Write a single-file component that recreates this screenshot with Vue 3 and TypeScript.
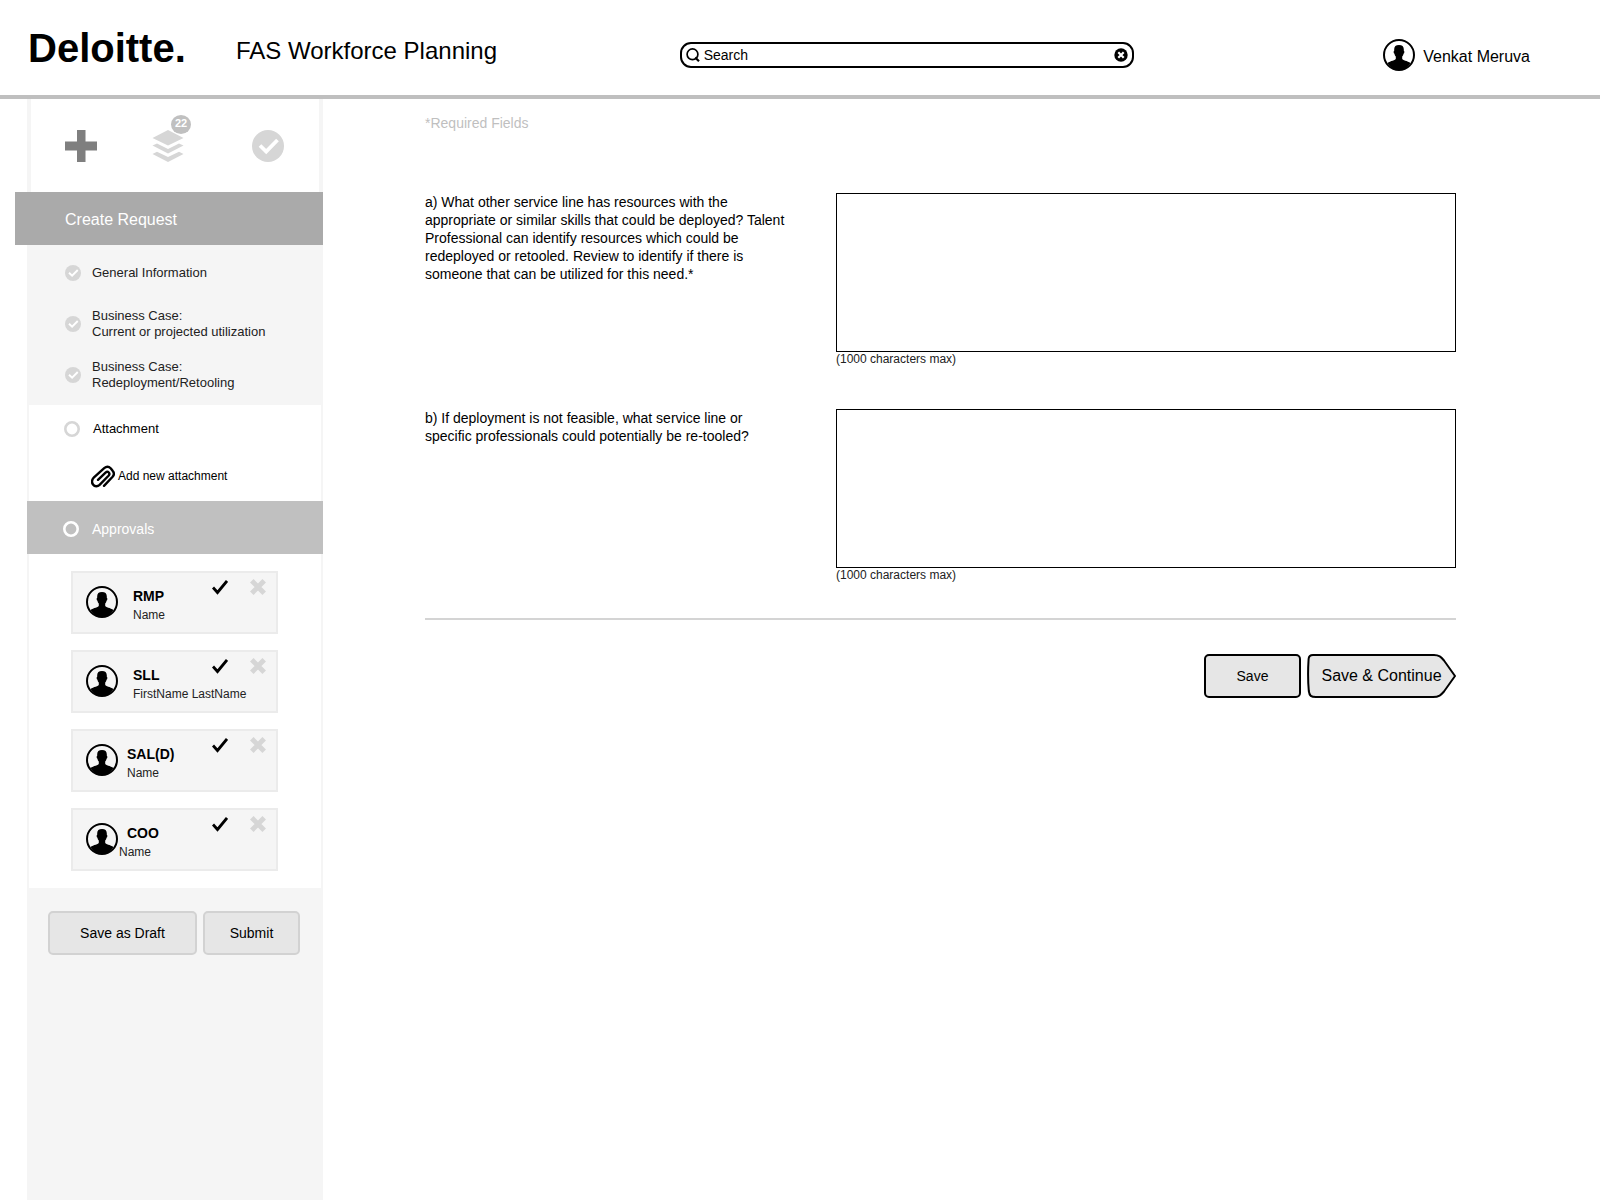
<script setup lang="ts">
import { ref } from 'vue'

interface Step {
  id: string
  lines: string[]
}

interface Approver {
  role: string
  name: string
  layout: 'wide' | 'narrow' | 'tight'
}

interface Question {
  id: string
  text: string
}

const query = ref('Search')
const answers = ref<Record<string, string>>({ a: '', b: '' })

const steps: Step[] = [
  { id: 'general', lines: ['General Information'] },
  { id: 'utilization', lines: ['Business Case:', 'Current or projected utilization'] },
  { id: 'redeployment', lines: ['Business Case:', 'Redeployment/Retooling'] },
]

const approvers: Approver[] = [
  { role: 'RMP', name: 'Name', layout: 'wide' },
  { role: 'SLL', name: 'FirstName LastName', layout: 'wide' },
  { role: 'SAL(D)', name: 'Name', layout: 'narrow' },
  { role: 'COO', name: 'Name', layout: 'tight' },
]

const questions: Question[] = [
  {
    id: 'a',
    text: 'a) What other service line has resources with the appropriate or similar skills that could be deployed? Talent Professional can identify resources which could be redeployed or retooled. Review to identify if there is someone that can be utilized for this need.*',
  },
  {
    id: 'b',
    text: 'b) If deployment is not feasible, what service line or specific professionals could potentially be re-tooled?',
  },
]
</script>

<template>
  <svg class="sprite" aria-hidden="true">
    <symbol id="avatar" viewBox="0 0 32 32">
      <circle cx="16" cy="16" r="15" fill="none" stroke="#000" stroke-width="2" />
      <path d="M16 6c-3.200 0-4.800 1.500-4.800 4.300v1.500c-.9.200-.7 2.700.3 2.900.2 1.400.7 2.200 1.300 2.900v2.200c0 1.600-5.400 2.100-8.300 4.200C7 28.500 11.500 31 16 31s9-2.500 11.500-7c-2.900-2.100-8.300-2.600-8.300-4.200v-2.200c.6-.7 1.100-1.500 1.300-2.900 1-.2 1.200-2.700.3-2.900v-1.500C20.800 7.500 19.200 6 16 6z" />
    </symbol>
    <symbol id="done" viewBox="0 0 32 32">
      <circle cx="16" cy="16" r="16" fill="#d6d6d6" />
      <path d="M8 15.500l6.200 6L25.500 10" fill="none" stroke="#fff" stroke-width="3.800" />
    </symbol>
    <symbol id="ring" viewBox="0 0 16 16">
      <circle cx="8" cy="8" r="6.700" fill="none" stroke="currentColor" stroke-width="2.600" />
    </symbol>
  </svg>

  <div class="page">
    <header class="header">
      <div class="logo">Deloitte.</div>
      <h1 class="title">FAS Workforce Planning</h1>
      <form class="search" role="search" @submit.prevent>
        <svg class="search-icon" viewBox="0 0 14 14" aria-hidden="true">
          <circle cx="6.500" cy="6.300" r="5.400" fill="none" stroke="#000" stroke-width="1.700" />
          <path d="M9.200 9.500l3.800 3.700" stroke="#000" stroke-width="2.200" />
        </svg>
        <input v-model="query" class="search-input" type="text" aria-label="Search" />
        <button class="clear" type="button" aria-label="Clear" @click="query = ''">
          <svg viewBox="0 0 14 14" aria-hidden="true">
            <circle cx="7" cy="7" r="6.700" />
            <path d="M4.300 4.300l5.400 5.400M9.700 4.300l-5.400 5.400" stroke="#fff" stroke-width="2.200" />
          </svg>
        </button>
      </form>
      <div class="user">
        <svg class="avatar" aria-hidden="true"><use href="#avatar" /></svg>
        <span class="user-name">Venkat Meruva</span>
      </div>
    </header>

    <div class="body">
      <aside class="sidebar">
        <div class="tools">
          <button class="tool" type="button" aria-label="Create">
            <svg viewBox="0 0 32 32" aria-hidden="true"><path d="M12 0h8.500v11.500H32v9H20.500V32H12V20.500H0v-9h12z" fill="#7f7f7f" /></svg>
          </button>
          <button class="tool" type="button" aria-label="Requests">
            <svg viewBox="0 0 32 32" aria-hidden="true" fill="#d6d6d6">
              <path d="M16 0l15.500 8L16 15.500.5 8z" />
              <path d="M.5 15.500l4.500-2 11 5.500 11-5.500 4.500 2L16 23.500z" />
              <path d="M.5 24l4.500-2.200L16 27l11-5.200 4.500 2.200L16 32z" />
            </svg>
            <span class="badge">22</span>
          </button>
          <button class="tool" type="button" aria-label="Approved">
            <svg aria-hidden="true"><use href="#done" /></svg>
          </button>
        </div>

        <h2 class="section">Create Request</h2>

        <ul class="steps">
          <li v-for="step in steps" :key="step.id" class="step">
            <svg class="mark" aria-hidden="true"><use href="#done" /></svg>
            <a class="step-link" href="#"><span v-for="line in step.lines" :key="line">{{ line }}</span></a>
          </li>
        </ul>

        <div class="attachment">
          <div class="step-head">
            <svg class="mark" aria-hidden="true"><use href="#ring" /></svg>
            <a href="#">Attachment</a>
          </div>
          <a class="add" href="#">
            <svg class="clip" viewBox="0 0 24 24" aria-hidden="true">
              <path
                d="M13 21.800l8.600-9c1.700-1.900 1.700-4 0-6l-1.700-2.300c-2-2-4.700-2-6.700-.3L3 13.300c-2.200 2.400-2.600 5-1 7.200 1.800 2.400 4.600 2.300 6.600.4l8.900-9.100c2.200-2.500-.5-5.300-3-3.200l-7.500 7.200"
                fill="none" stroke="#000" stroke-width="2.400" stroke-linecap="round"
              />
            </svg>
            <span>Add new attachment</span>
          </a>
        </div>

        <h2 class="approvals">
          <svg class="mark" aria-hidden="true"><use href="#ring" /></svg>
          <span>Approvals</span>
        </h2>

        <div class="cards">
          <article v-for="person in approvers" :key="person.role" class="card" :class="person.layout">
            <svg class="avatar" aria-hidden="true"><use href="#avatar" /></svg>
            <div class="who">
              <h3 class="role">{{ person.role }}</h3>
              <p class="name">{{ person.name }}</p>
            </div>
            <div class="actions">
              <button class="action" type="button" aria-label="Approve">
                <svg viewBox="0 0 16 16" aria-hidden="true"><path d="M1 8.500l4.500 5L15 2" fill="none" stroke="#000" stroke-width="2.800" /></svg>
              </button>
              <button class="action" type="button" aria-label="Reject">
                <svg viewBox="0 0 16 16" aria-hidden="true"><path d="M1.800 1.800l12.400 12.400M14.200 1.800L1.800 14.200" fill="none" stroke="#d6d6d6" stroke-width="5" /></svg>
              </button>
            </div>
          </article>
        </div>

        <div class="sidebar-actions">
          <button class="button draft" type="button">Save as Draft</button>
          <button class="button" type="button">Submit</button>
        </div>
      </aside>

      <main class="main">
        <p class="required">*Required Fields</p>
        <form @submit.prevent>
          <div class="questions">
            <div v-for="question in questions" :key="question.id" class="question">
              <label class="label" :for="question.id">{{ question.text }}</label>
              <div class="answer">
                <textarea :id="question.id" v-model="answers[question.id]" class="box" maxlength="1000"></textarea>
                <p class="hint">(1000 characters max)</p>
              </div>
            </div>
          </div>
          <hr class="rule" />
          <div class="form-actions">
            <button class="button dark" type="button">Save</button>
            <button class="continue" type="submit">
              <svg class="arrow" viewBox="0 0 149 44" aria-hidden="true">
                <path
                  d="M6 1H127C132 1 134 3 137 6.500L148 22L137 37.500C134 41 132 43 126 43H9C4 43 2.500 42 1.800 37C1 28 1 14 1.600 5C1.800 2 3 1 6 1Z"
                  fill="#e6e6e6" stroke="#000" stroke-width="2"
                />
              </svg>
              <span class="continue-text">Save &amp; Continue</span>
            </button>
          </div>
        </form>
      </main>
    </div>
  </div>
</template>

<style>
body {
  margin: 0;
  background: #fff;
}
</style>

<style scoped>
.sprite {
  position: absolute;
  width: 0;
  height: 0;
}

.page {
  display: flex;
  flex-direction: column;
  min-height: 100vh;
  color: #000;
  font-family: "Liberation Sans", Arial, sans-serif;
  font-size: 14px;
  line-height: 18px;
}

h1,
h2,
h3,
p,
ul {
  margin: 0;
  padding: 0;
  font-weight: 400;
}

a {
  color: inherit;
  text-decoration: none;
}

button,
input,
textarea {
  box-sizing: border-box;
  margin: 0;
  padding: 0;
  border: 0;
  background: none;
  color: inherit;
  font: inherit;
}

button {
  cursor: pointer;
}

svg {
  display: block;
}

.header {
  display: grid;
  grid-template-columns: 208px minmax(280px, 444fr) minmax(200px, 455fr) minmax(160px, 396fr);
  align-items: center;
  box-sizing: border-box;
  height: 99px;
  padding: 15px 70px 0 28px;
  border-bottom: 4px solid #bfbfbf;
}

.logo {
  padding-bottom: 14px;
  font-size: 40px;
  font-weight: 700;
  line-height: 44px;
}

.title {
  padding-bottom: 8px;
  font-size: 24px;
  line-height: 28px;
}

.search {
  display: flex;
  align-items: center;
  box-sizing: border-box;
  height: 26px;
  padding: 0 4px;
  border: 2px solid #000;
  border-radius: 11px;
  gap: 4px;
}

.search-icon {
  flex: none;
  width: 14px;
  height: 14px;
}

.search-input {
  flex: 1;
  min-width: 0;
  height: 18px;
  outline: 0;
}

.clear,
.clear svg {
  flex: none;
  width: 14px;
  height: 14px;
}

.user {
  display: flex;
  align-items: center;
  justify-content: flex-end;
  gap: 8px;
  font-size: 16px;
}

.user-name {
  padding-top: 4px;
}

.avatar {
  flex: none;
  width: 32px;
  height: 32px;
}

.body {
  display: flex;
  flex: 1;
  padding-left: 27px;
}

.sidebar {
  flex: none;
  width: 296px;
  background: #f5f5f5;
}

.tools {
  display: grid;
  grid-template-columns: 87px 100px 32px;
  box-sizing: border-box;
  height: 93px;
  margin: 0 4px;
  padding: 31px 34px;
  background: #fff;
}

.tool {
  position: relative;
  width: 32px;
  height: 32px;
}

.tool svg {
  width: 32px;
  height: 32px;
}

.badge {
  position: absolute;
  top: -15px;
  right: -7px;
  width: 20px;
  height: 19px;
  border-radius: 50%;
  background: #c0c0c0;
  color: #fff;
  font-size: 11px;
  font-weight: 700;
  line-height: 17px;
  text-align: center;
}

.section {
  margin-left: -12px;
  padding: 2px 0 0 50px;
  background: #aaa;
  color: #fff;
  font-size: 16px;
  line-height: 51px;
}

.steps {
  display: flex;
  flex-direction: column;
  gap: 1px;
  padding: 3px 0 5px 38px;
  color: #222;
  font-size: 13px;
  line-height: 16px;
  list-style: none;
}

.step {
  display: flex;
  align-items: center;
  height: 50px;
  gap: 11px;
}

.step-link span {
  display: block;
}

.mark {
  flex: none;
  width: 16px;
  height: 16px;
}

.attachment {
  margin: 0 2px;
  padding: 0 0 13px 35px;
  background: #fff;
  font-size: 13px;
  line-height: 16px;
}

.step-head {
  display: flex;
  align-items: center;
  height: 48px;
  gap: 13px;
}

.step-head .mark {
  color: #d6d6d6;
}

.add {
  display: flex;
  align-items: center;
  height: 24px;
  margin: 11px 0 0 27px;
  gap: 3px;
  font-size: 12px;
  line-height: 14px;
}

.clip {
  width: 24px;
  height: 24px;
}

.approvals {
  display: flex;
  align-items: center;
  box-sizing: border-box;
  height: 53px;
  padding: 3px 0 0 36px;
  background: #c0c0c0;
  color: #fff;
  font-size: 14px;
  gap: 13px;
}

.cards {
  display: flex;
  flex-direction: column;
  margin: 0 2px;
  padding: 17px 43px 17px 42px;
  background: #fff;
  gap: 16px;
}

.card {
  position: relative;
  display: flex;
  box-sizing: border-box;
  height: 63px;
  padding: 13px 10px 0 13px;
  border: 2px solid #ebebeb;
  background: #f5f5f5;
  gap: 15px;
}

.narrow {
  gap: 9px;
}

.tight {
  gap: 1px;
}

.tight .role {
  padding-left: 8px;
}

.role {
  font-size: 14px;
  font-weight: 700;
  line-height: 20px;
}

.name {
  padding-top: 2px;
  color: #222;
  font-size: 12px;
  line-height: 14px;
}

.actions {
  position: absolute;
  top: 6px;
  right: 10px;
  display: flex;
  gap: 22px;
}

.action,
.action svg {
  width: 16px;
  height: 16px;
}

.sidebar-actions {
  display: flex;
  padding: 23px 23px 0 21px;
  gap: 6px;
}

.button {
  width: 97px;
  height: 44px;
  border: 2px solid #d2d2d2;
  border-radius: 5px;
  background: #e6e6e6;
}

.draft {
  width: 149px;
}

.dark {
  border-color: #000;
}

.main {
  flex: 1;
  min-width: 0;
  padding: 15px 144px 40px 102px;
}

.required {
  color: #bfbfbf;
}

.questions {
  display: flex;
  flex-direction: column;
  padding-top: 61px;
  gap: 43px;
}

.question {
  display: grid;
  grid-template-columns: 362px minmax(0, 1fr);
  column-gap: 49px;
}

.box {
  display: block;
  width: 100%;
  height: 159px;
  border: 1px solid #000;
  background: #fff;
  resize: none;
}

.hint {
  color: #222;
  font-size: 12px;
  line-height: 14px;
}

.rule {
  height: 2px;
  margin: 36px 0 34px;
  border: 0;
  background: #d4d4d4;
}

.form-actions {
  display: flex;
  justify-content: flex-end;
  gap: 6px;
}

.continue {
  position: relative;
  width: 149px;
  height: 44px;
  font-size: 16px;
}

.arrow {
  position: absolute;
  inset: 0;
  width: 149px;
  height: 44px;
}

.continue-text {
  position: relative;
}
</style>
